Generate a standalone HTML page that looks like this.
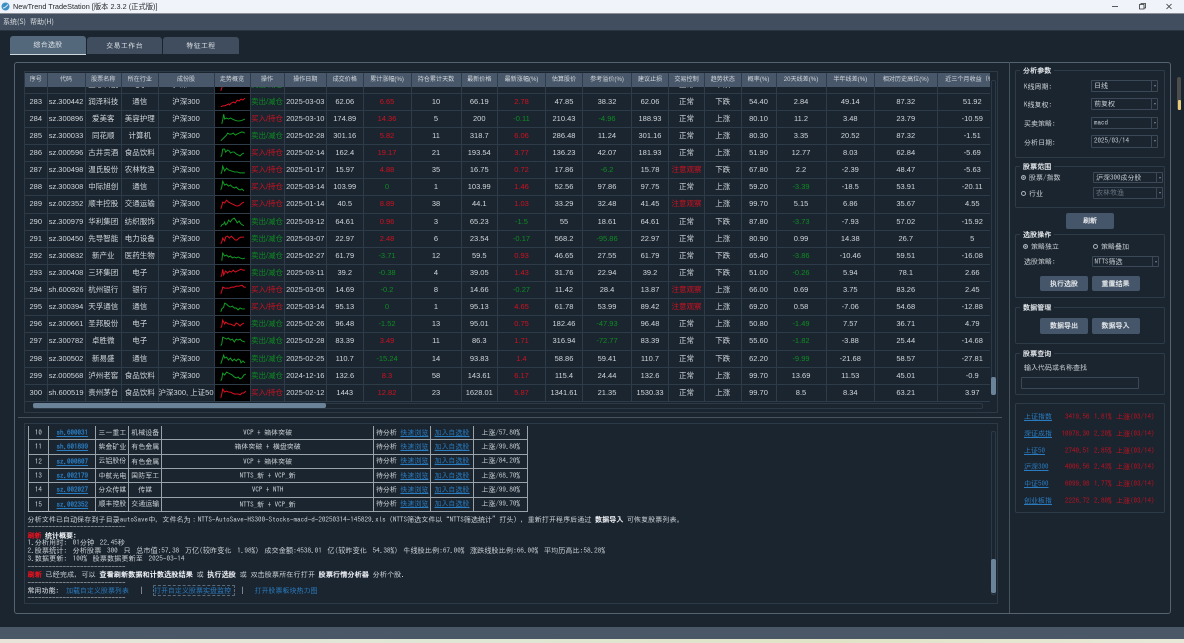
<!DOCTYPE html>
<html lang="zh"><head><meta charset="utf-8"><title>NewTrend TradeStation</title>
<style>
html,body{margin:0;padding:0;width:1184px;height:643px;overflow:hidden;background:#1a2530}
body{position:relative;font-family:"Liberation Sans","Noto Sans CJK SC",sans-serif;color:#d2d6da;filter:blur(.25px)}
.a{position:absolute}
#title{left:0;top:0;width:1184px;height:13px;background:#f0f3f9;border-bottom:1px solid #8a9096;box-sizing:content-box}
#menu{left:0;top:14px;width:1184px;height:16px;background:#414e5f;border-bottom:1px solid #2a3542;font:7px/16px "Noto Sans CJK SC",sans-serif;color:#d8dce0}
.tab{position:absolute;box-sizing:border-box;background:#3f4d5e;border-radius:3px 3px 0 0;text-align:center;color:#e0e4e8;font:7px/18px "IPAGothic","Noto Sans CJK SC",monospace;letter-spacing:.3px}
#frame{left:14px;top:62px;width:1155px;height:550px;border:1px solid #55626f;border-radius:3px}
#tf{left:24px;top:71px;width:972px;height:340px;border:1px solid #2c3947}
#clip{left:25px;top:87px;width:964.5px;height:315.5px;overflow:hidden}
#rows{margin-top:-10.43px;width:1000px}
.r,.h{display:grid;grid-template-columns:22.5px 38px 36.5px 36.5px 56px 36px 34px 42.5px 36.5px 48px 50px 36.5px 48px 37px 49px 37px 36px 36.5px 35px 50px 48.5px 62.5px 70.5px}
.r{height:17.13px;box-sizing:border-box;border-bottom:1px solid #2e3b49;font-size:7.5px;line-height:16.1px}
.r>*{text-align:center;white-space:nowrap;overflow:hidden;border-right:1px solid #2e3b49;font-style:normal;display:block;box-sizing:border-box}
.r>svg{width:100%;height:100%;padding:1px 1.3px 1.1px 1px;}
#hd{left:25px;top:73px;width:964.5px;height:14px;overflow:hidden;background:#485769}
.h{width:1000px;font-size:6.1px;line-height:14px;color:#d2d8de}
.h>*{text-align:center;white-space:nowrap;overflow:hidden;border-right:1px solid #2f3c4c;font-style:normal;display:block;box-sizing:border-box}
.R{color:#d0101e}.G{color:#0f8c20}
.m{font-family:"IPAGothic","Noto Sans CJK SC",monospace;font-size:7px;line-height:9px;white-space:nowrap;color:#ced2d6}
.sb{position:absolute;background:#6b8398;border-radius:2px}
.tr{position:absolute;border:1px solid #2c3947;border-radius:2px;box-sizing:border-box}
#low{left:24px;top:423px;width:972px;height:179px;border:1px solid #2c3947}
table{position:absolute;left:27.5px;top:426px;width:500px;height:81.5px;border-collapse:collapse;table-layout:fixed;font-family:"IPAGothic","Noto Sans CJK SC",monospace;font-size:7px;color:#ced2d6;text-align:center}
td{border:1px solid #9aa2aa;padding:0;white-space:nowrap;overflow:hidden;height:13.33px}
tr:first-child td{border-top:none}
a,.lk{color:#2a7cc0;text-decoration:underline}
td:nth-child(2) a{font-weight:bold}
.nu{text-decoration:none}
.w{color:#eef0f4;font-weight:bold}
.rd{color:#f0101c;font-weight:bold}
.gb{position:absolute;box-sizing:border-box;border:1px solid #2e3b49;border-radius:2px}
.gt{position:absolute;left:4px;top:-5px;padding:0 3px;background:#1a2530;font:bold 7px/9px "IPAGothic","Noto Sans CJK SC",monospace;color:#e0e4e8;letter-spacing:.1px}
.cb{position:absolute;box-sizing:border-box;border:1px solid #3a4857;border-radius:1px;font:7px/10px "IPAGothic","Noto Sans CJK SC",monospace;padding-left:2px;color:#c8ced4;white-space:nowrap}
.cb:after{content:"";position:absolute;right:5px;top:0;bottom:0;width:0;border-left:1px solid #3a4857}
.cb:before{content:"";position:absolute;right:1px;top:4px;border:1.3px solid transparent;border-top:2px solid #7a8693}
.btn{position:absolute;box-sizing:border-box;background:#46566a;border-radius:2px;text-align:center;font:bold 7px/15.5px "IPAGothic","Noto Sans CJK SC",monospace;color:#e0e4e8}
.rad{position:absolute;width:5px;height:5px;box-sizing:border-box;border:1px solid #aab2ba;border-radius:50%}
.rad.on{background:#aab2ba;box-shadow:inset 0 0 0 .6px #1a2530}
.ix{position:absolute;left:1024px;width:130.5px;height:9px;font:7px/9px "IPAGothic","Noto Sans CJK SC",monospace;white-space:nowrap}
.ix span{position:absolute;right:0;color:#c4101e;word-spacing:1px}
svg polyline{stroke-width:1}
</style></head><body>
<div class="a" id="title">
<svg class="a" style="left:1px;top:1.5px" width="9" height="9" viewBox="0 0 9 9"><circle cx="4.5" cy="4.5" r="4" fill="#3e8fc4"/><path d="M2 6C3.5 6 5 5 7 2.5" stroke="#e6f2fa" stroke-width="1" fill="none"/></svg>
<div class="a" style="left:13px;top:2px;font-size:7.3px;line-height:10px;color:#25282c;white-space:nowrap">NewTrend TradeStation [版本 2.3.2 (正式版)]</div>
<svg class="a" style="left:1110px;top:2px" width="66" height="9" viewBox="0 0 66 9" fill="none" stroke="#333" stroke-width=".8"><path d="M2 4.5H8"/><path d="M29.5 2.5h4.5v4.5h-4.5zM31 2.5V1.5h4.5v4.5h-1.5"/><path d="M56.5 2l5 5M61.5 2l-5 5"/></svg>
</div>
<div class="a" id="menu"><span class="a" style="left:3px;white-space:nowrap">系统(S)</span><span class="a" style="left:30px;white-space:nowrap">帮助(H)</span></div>
<div class="tab" style="left:10px;top:36px;width:76px;height:19px;background:#54687c;border-bottom:1.5px solid #cfd6dc">综合选股</div>
<div class="tab" style="left:87px;top:37px;width:75px;height:17px">交易工作台</div>
<div class="tab" style="left:163px;top:37px;width:76px;height:17px">特征工程</div>
<div class="a" id="frame"></div>
<div class="a" style="left:1009px;top:62px;width:1px;height:551px;background:#46525e"></div>
<div class="a" style="left:18px;top:416.5px;width:984px;height:1px;background:#46525e"></div>
<div class="a" id="tf"></div>
<div class="a" id="hd"><div class="h"><i>序号</i><i>代码</i><i>股票名称</i><i>所在行业</i><i>成份股</i><i>走势概览</i><i>操作</i><i>操作日期</i><i>成交价格</i><i>累计涨幅(%)</i><i>持仓累计天数</i><i>最新价格</i><i>最新涨幅(%)</i><i>估算股价</i><i>参考溢价(%)</i><i>建议止损</i><i>交易控制</i><i>趋势状态</i><i>概率(%)</i><i>20天线差(%)</i><i>半年线差(%)</i><i>相对历史高位(%)</i><i>近三个月收益（%）</i></div></div>
<div class="a" id="clip"><div id="rows">
<div class="r"><i>282</i><i>sz.300433</i><i>蓝思科技</i><i>电子</i><i>沪深300</i><svg viewBox="0 0 34 14" style="background:#000"><polyline fill="none" stroke="#e01020" points="5,13 6,10 7,7 8,9"/></svg><i class="G">卖出/减仓</i><i>2025-02-20</i><i>26.93</i><i class="G">-0.04</i><i>16</i><i>26.92</i><i class="R">2.02</i><i>19.66</i><i>36.93</i><i>26.93</i><i>正常</i><i>下跌</i><i>56.30</i><i class="G">-0.85</i><i>14.24</i><i>60.5</i><i>15.77</i></div>
<div class="r"><i>283</i><i>sz.300442</i><i>润泽科技</i><i>通信</i><i>沪深300</i><svg viewBox="0 0 34 14" style="background:#000"><polyline fill="none" stroke="#e01020" points="5,12 7,11 9,11 11,10 13,9 14,10 16,8 18,7 20,8 22,5 24,6 26,4 28,5 30,3"/></svg><i class="G">卖出/减仓</i><i>2025-03-03</i><i>62.06</i><i class="R">6.65</i><i>10</i><i>66.19</i><i class="R">2.78</i><i>47.85</i><i>38.32</i><i>62.06</i><i>正常</i><i>下跌</i><i>54.40</i><i>2.84</i><i>49.14</i><i>87.32</i><i>51.92</i></div>
<div class="r"><i>284</i><i>sz.300896</i><i>爱美客</i><i>美容护理</i><i>沪深300</i><svg viewBox="0 0 34 14" style="background:#000"><polyline fill="none" stroke="#12a024" points="6,12 7,8 8,2 9,7 11,6 13,7 15,6 17,7 19,8 22,9 25,9 28,8 30,7"/></svg><i class="R">买入/持仓</i><i>2025-03-10</i><i>174.89</i><i class="R">14.36</i><i>5</i><i>200</i><i class="G">-0.11</i><i>210.43</i><i class="G">-4.96</i><i>188.93</i><i>正常</i><i>上涨</i><i>80.10</i><i>11.2</i><i>3.48</i><i>23.79</i><i>-10.59</i></div>
<div class="r"><i>285</i><i>sz.300033</i><i>同花顺</i><i>计算机</i><i>沪深300</i><svg viewBox="0 0 34 14" style="background:#000"><polyline fill="none" stroke="#12a024" points="5,12 7,10 9,8 11,6 12,4 14,5 16,5 18,4 20,6 22,5 24,4 26,3 28,3 30,4"/></svg><i class="G">卖出/减仓</i><i>2025-02-28</i><i>301.16</i><i class="R">5.82</i><i>11</i><i>318.7</i><i class="R">6.06</i><i>286.48</i><i>11.24</i><i>301.16</i><i>正常</i><i>上涨</i><i>80.30</i><i>3.35</i><i>20.52</i><i>87.32</i><i>-1.51</i></div>
<div class="r"><i>286</i><i>sz.000596</i><i>古井贡酒</i><i>食品饮料</i><i>沪深300</i><svg viewBox="0 0 34 14" style="background:#000"><polyline fill="none" stroke="#12a024" points="5,11 6,9 7,3 9,3 10,6 12,4 14,5 15,7 17,6 19,6 21,8 23,9 25,10 27,8 29,7"/></svg><i class="R">买入/持仓</i><i>2025-02-14</i><i>162.4</i><i class="R">19.17</i><i>21</i><i>193.54</i><i class="R">3.77</i><i>136.23</i><i>42.07</i><i>181.93</i><i>正常</i><i>上涨</i><i>51.90</i><i>12.77</i><i>8.03</i><i>62.84</i><i>-5.69</i></div>
<div class="r"><i>287</i><i>sz.300498</i><i>温氏股份</i><i>农林牧渔</i><i>沪深300</i><svg viewBox="0 0 34 14" style="background:#000"><polyline fill="none" stroke="#12a024" points="5,11 6,9 7,3 9,8 11,5 13,7 16,8 19,9 22,9 25,10 28,10 30,10"/></svg><i class="R">买入/持仓</i><i>2025-01-17</i><i>15.97</i><i class="R">4.88</i><i>35</i><i>16.75</i><i class="R">0.72</i><i>17.86</i><i class="G">-6.2</i><i>15.78</i><i class="R">注意观察</i><i>下跌</i><i>67.80</i><i>2.2</i><i>-2.39</i><i>48.47</i><i>-5.63</i></div>
<div class="r"><i>288</i><i>sz.300308</i><i>中际旭创</i><i>通信</i><i>沪深300</i><svg viewBox="0 0 34 14" style="background:#000"><polyline fill="none" stroke="#12a024" points="5,10 6,7 7,1 9,5 11,4 13,6 15,5 17,7 19,8 21,7 23,9 25,10 27,9 29,11"/></svg><i class="R">买入/持仓</i><i>2025-03-14</i><i>103.99</i><i class="G">0</i><i>1</i><i>103.99</i><i class="R">1.46</i><i>52.56</i><i>97.86</i><i>97.75</i><i>正常</i><i>上涨</i><i>59.20</i><i class="G">-3.39</i><i>-18.5</i><i>53.91</i><i>-20.11</i></div>
<div class="r"><i>289</i><i>sz.002352</i><i>顺丰控股</i><i>交通运输</i><i>沪深300</i><svg viewBox="0 0 34 14" style="background:#000"><polyline fill="none" stroke="#e01020" points="5,12 6,9 7,5 9,6 11,3 13,5 15,6 17,7 19,8 21,9 23,9 25,8 27,6 29,5"/></svg><i class="R">买入/持仓</i><i>2025-01-14</i><i>40.5</i><i class="R">8.89</i><i>38</i><i>44.1</i><i class="R">1.03</i><i>33.29</i><i>32.48</i><i>41.45</i><i class="R">注意观察</i><i>上涨</i><i>99.70</i><i>5.15</i><i>6.86</i><i>35.67</i><i>4.55</i></div>
<div class="r"><i>290</i><i>sz.300979</i><i>华利集团</i><i>纺织服饰</i><i>沪深300</i><svg viewBox="0 0 34 14" style="background:#000"><polyline fill="none" stroke="#12a024" points="5,12 6,10 8,9 9,7 10,10 12,8 13,5 15,7 17,4 19,3 21,6 22,8 24,6 26,9 29,11"/></svg><i class="G">卖出/减仓</i><i>2025-03-12</i><i>64.61</i><i class="R">0.96</i><i>3</i><i>65.23</i><i class="G">-1.5</i><i>55</i><i>18.61</i><i>64.61</i><i>正常</i><i>下跌</i><i>87.80</i><i class="G">-3.73</i><i>-7.93</i><i>57.02</i><i>-15.92</i></div>
<div class="r"><i>291</i><i>sz.300450</i><i>先导智能</i><i>电力设备</i><i>沪深300</i><svg viewBox="0 0 34 14" style="background:#000"><polyline fill="none" stroke="#e01020" points="5,12 6,10 7,6 9,9 10,5 12,4 14,6 16,4 18,6 20,8 22,8 24,6 26,5 29,5"/></svg><i class="G">卖出/减仓</i><i>2025-03-07</i><i>22.97</i><i class="R">2.48</i><i>6</i><i>23.54</i><i class="G">-0.17</i><i>568.2</i><i class="G">-95.86</i><i>22.97</i><i>正常</i><i>上涨</i><i>80.90</i><i>0.99</i><i>14.38</i><i>26.7</i><i>5</i></div>
<div class="r"><i>292</i><i>sz.300832</i><i>新产业</i><i>医药生物</i><i>沪深300</i><svg viewBox="0 0 34 14" style="background:#000"><polyline fill="none" stroke="#12a024" points="6,12 7,4 9,7 11,6 13,8 15,7 17,9 19,8 21,9 23,8 25,9 28,10 30,9"/></svg><i class="G">卖出/减仓</i><i>2025-02-27</i><i>61.79</i><i class="G">-3.71</i><i>12</i><i>59.5</i><i class="R">0.93</i><i>46.65</i><i>27.55</i><i>61.79</i><i>正常</i><i>下跌</i><i>65.40</i><i class="G">-3.86</i><i>-10.46</i><i>59.51</i><i>-16.08</i></div>
<div class="r"><i>293</i><i>sz.300408</i><i>三环集团</i><i>电子</i><i>沪深300</i><svg viewBox="0 0 34 14" style="background:#000"><polyline fill="none" stroke="#e01020" points="5,11 6,9 7,3 8,9 10,5 12,7 14,5 16,6 18,4 20,6 22,5 24,4 26,3 28,4 30,4"/></svg><i class="G">卖出/减仓</i><i>2025-03-11</i><i>39.2</i><i class="G">-0.38</i><i>4</i><i>39.05</i><i class="R">1.43</i><i>31.76</i><i>22.94</i><i>39.2</i><i>正常</i><i>下跌</i><i>51.00</i><i class="G">-0.26</i><i>5.94</i><i>78.1</i><i>2.66</i></div>
<div class="r"><i>294</i><i>sh.600926</i><i>杭州银行</i><i>银行</i><i>沪深300</i><svg viewBox="0 0 34 14" style="background:#000"><polyline fill="none" stroke="#e01020" points="5,11 6,8 7,4 9,5 12,5 14,5 16,4 19,4 21,3 24,3 27,2 29,4 31,4"/></svg><i class="R">买入/持仓</i><i>2025-03-05</i><i>14.69</i><i class="G">-0.2</i><i>8</i><i>14.66</i><i class="G">-0.27</i><i>11.42</i><i>28.4</i><i>13.87</i><i class="R">注意观察</i><i>上涨</i><i>66.00</i><i>0.69</i><i>3.75</i><i>83.26</i><i>2.45</i></div>
<div class="r"><i>295</i><i>sz.300394</i><i>天孚通信</i><i>通信</i><i>沪深300</i><svg viewBox="0 0 34 14" style="background:#000"><polyline fill="none" stroke="#12a024" points="5,12 6,9 8,7 9,3 11,4 13,6 15,7 17,6 19,8 21,8 23,10 25,8 27,9 30,9"/></svg><i class="R">买入/持仓</i><i>2025-03-14</i><i>95.13</i><i class="G">0</i><i>1</i><i>95.13</i><i class="R">4.65</i><i>61.78</i><i>53.99</i><i>89.42</i><i class="R">注意观察</i><i>上涨</i><i>69.20</i><i>0.58</i><i>-7.06</i><i>54.68</i><i>-12.88</i></div>
<div class="r"><i>296</i><i>sz.300661</i><i>圣邦股份</i><i>电子</i><i>沪深300</i><svg viewBox="0 0 34 14" style="background:#000"><polyline fill="none" stroke="#e01020" points="5,11 6,9 7,3 9,7 10,5 13,7 15,7 17,8 19,9 21,6 23,7 25,9 27,7 29,6"/></svg><i class="G">卖出/减仓</i><i>2025-02-26</i><i>96.48</i><i class="G">-1.52</i><i>13</i><i>95.01</i><i class="R">0.75</i><i>182.46</i><i class="G">-47.93</i><i>96.48</i><i>正常</i><i>上涨</i><i>50.80</i><i class="G">-1.49</i><i>7.57</i><i>36.71</i><i>4.79</i></div>
<div class="r"><i>297</i><i>sz.300782</i><i>卓胜微</i><i>电子</i><i>沪深300</i><svg viewBox="0 0 34 14" style="background:#000"><polyline fill="none" stroke="#12a024" points="5,12 6,10 7,3 9,4 11,5 13,4 15,6 17,5 19,8 21,5 23,6 25,5 27,7 30,8"/></svg><i class="G">卖出/减仓</i><i>2025-02-28</i><i>83.39</i><i class="R">3.49</i><i>11</i><i>86.3</i><i class="R">1.71</i><i>316.94</i><i class="G">-72.77</i><i>83.39</i><i>正常</i><i>下跌</i><i>55.60</i><i class="G">-1.82</i><i>-3.88</i><i>25.44</i><i>-14.68</i></div>
<div class="r"><i>298</i><i>sz.300502</i><i>新易盛</i><i>通信</i><i>沪深300</i><svg viewBox="0 0 34 14" style="background:#000"><polyline fill="none" stroke="#12a024" points="5,12 6,9 8,3 9,6 11,5 13,8 15,6 17,9 19,7 21,9 23,7 25,8 26,11 28,9 30,11"/></svg><i class="G">卖出/减仓</i><i>2025-02-25</i><i>110.7</i><i class="G">-15.24</i><i>14</i><i>93.83</i><i class="R">1.4</i><i>58.86</i><i>59.41</i><i>110.7</i><i>正常</i><i>下跌</i><i>62.20</i><i class="G">-9.99</i><i>-21.68</i><i>58.57</i><i>-27.81</i></div>
<div class="r"><i>299</i><i>sz.000568</i><i>泸州老窖</i><i>食品饮料</i><i>沪深300</i><svg viewBox="0 0 34 14" style="background:#000"><polyline fill="none" stroke="#12a024" points="5,12 6,10 7,4 9,6 11,3 13,4 15,5 17,6 19,8 21,9 23,8 25,10 27,9 29,6 31,5"/></svg><i class="G">卖出/减仓</i><i>2024-12-16</i><i>132.6</i><i class="R">8.3</i><i>58</i><i>143.61</i><i class="R">6.17</i><i>115.4</i><i>24.44</i><i>132.6</i><i>正常</i><i>上涨</i><i>99.70</i><i>13.69</i><i>11.53</i><i>45.01</i><i>-0.9</i></div>
<div class="r"><i>300</i><i>sh.600519</i><i>贵州茅台</i><i>食品饮料</i><i>沪深300, 上证50</i><svg viewBox="0 0 34 14" style="background:#000"><polyline fill="none" stroke="#e01020" points="5,12 6,8 7,3 9,6 11,5 13,6 15,6 17,7 19,8 21,8 23,8 25,9 27,7 29,7 31,5"/></svg><i class="R">买入/持仓</i><i>2025-02-12</i><i>1443</i><i class="R">12.82</i><i>23</i><i>1628.01</i><i class="R">5.87</i><i>1341.61</i><i>21.35</i><i>1530.33</i><i>正常</i><i>上涨</i><i>99.70</i><i>8.5</i><i>8.34</i><i>63.21</i><i>3.97</i></div>
</div></div>
<div class="tr" style="left:990.5px;top:80px;width:5.5px;height:315px"></div>
<div class="sb" style="left:991px;top:376.5px;width:4.5px;height:18px"></div>
<div class="tr" style="left:33px;top:403px;width:950px;height:5.5px"></div>
<div class="sb" style="left:33px;top:403.3px;width:293px;height:5px"></div>
<div class="a" id="low"></div>
<div class="tr" style="left:990.5px;top:431px;width:5.5px;height:164px"></div>
<div class="sb" style="left:991px;top:559px;width:4.5px;height:34px"></div>
<table><colgroup><col style="width:20.7px"><col style="width:47.2px"><col style="width:33px"><col style="width:32.8px"><col style="width:211.8px"><col style="width:57.4px"><col style="width:42.4px"><col style="width:54.7px"></colgroup>
<tr><td>10</td><td><a>sh.600031</a></td><td>三一重工</td><td>机械设备</td><td>VCP + 箱体突破</td><td>待分析 <a>快速浏览</a></td><td><a>加入自选股</a></td><td>上涨/57.80%</td></tr>
<tr><td>11</td><td><a>sh.601899</a></td><td>紫金矿业</td><td>有色金属</td><td>箱体突破 + 横盘突破</td><td>待分析 <a>快速浏览</a></td><td><a>加入自选股</a></td><td>上涨/99.80%</td></tr>
<tr><td>12</td><td><a>sz.000807</a></td><td>云铝股份</td><td>有色金属</td><td>VCP + 箱体突破</td><td>待分析 <a>快速浏览</a></td><td><a>加入自选股</a></td><td>上涨/84.20%</td></tr>
<tr><td>13</td><td><a>sz.002179</a></td><td>中航光电</td><td>国防军工</td><td>NTTS_新 + VCP_新</td><td>待分析 <a>快速浏览</a></td><td><a>加入自选股</a></td><td>上涨/68.70%</td></tr>
<tr><td>14</td><td><a>sz.002027</a></td><td>分众传媒</td><td>传媒</td><td>VCP + NTH</td><td>待分析 <a>快速浏览</a></td><td><a>加入自选股</a></td><td>上涨/99.80%</td></tr>
<tr><td>15</td><td><a>sz.002352</a></td><td>顺丰控股</td><td>交通运输</td><td>NTTS_新 + VCP_新</td><td>待分析 <a>快速浏览</a></td><td><a>加入自选股</a></td><td>上涨/99.70%</td></tr>
</table>
<div class="a m" style="left:27.5px;top:507px">----------------------------</div>
<div class="a m" style="left:27.5px;top:515px;font-size:7.1px">分析文件已自动保存到子目录autoSave中，文件名为：NTTS-AutoSave-HS300-Stocks-macd-d-20250314-145829.xls（NTTS筛选文件以“NTTS筛选统计”打头），重新打开程序后通过 <b class="w">数据导入</b> 可恢复股票列表。</div>
<div class="a m" style="left:27.5px;top:522px">----------------------------</div>
<div class="a m" style="left:27.5px;top:530.5px"><b class="rd">刷新</b> <b class="w">统计概要:</b></div>
<div class="a m" style="left:27.5px;top:538.2px;font-size:7.2px;word-spacing:2px">1.分析用时: 01分钟 22.45秒</div>
<div class="a m" style="left:27.5px;top:546.2px;font-size:7.2px;word-spacing:2px">2.股票统计: 分析股票 300 只 总市值:57.38 万亿(较昨变化 1.98%) 成交金额:4538.01 亿(较昨变化 54.38%) 牛线股比例:67.00% 涨跌线股比例:66.00% 平均历高比:58.28%</div>
<div class="a m" style="left:27.5px;top:553.8px;font-size:7.2px;word-spacing:2px">3.数据更新: 100% 股票数据更新至 2025-03-14</div>
<div class="a m" style="left:27.5px;top:561.5px">----------------------------</div>
<div class="a m" style="left:27.5px;top:569.5px;font-size:7.2px"><b class="rd">刷新</b> 已经完成，可以 <b class="w">查看刷新数据和计数选股结果</b> 或 <b class="w">执行选股</b> 或 双击股票所在行打开 <b class="w">股票行情分析器</b> 分析个股.</div>
<div class="a m" style="left:27.5px;top:577.5px">----------------------------</div>
<div class="a m" style="left:27.5px;top:585.5px"><b class="w" style="font-weight:normal">常用功能:</b></div>
<div class="a m" style="left:66px;top:585.5px;color:#2a7cc0">加载自定义股票列表</div>
<div class="a m" style="left:140px;top:585.5px;color:#dde">|</div>
<div class="a m" style="left:153px;top:585px;width:80px;height:9px;border:1px dashed #5b6a78;border-radius:1px;color:#2a7cc0">打开自定义股票实盘监控</div>
<div class="a m" style="left:240.5px;top:585.5px;color:#dde">|</div>
<div class="a m" style="left:254.5px;top:585.5px;color:#2a7cc0">打开股票板块热力图</div>
<div class="a m" style="left:27.5px;top:592.8px">----------------------------</div>

<div class="gb" style="left:1015px;top:70px;width:150px;height:87.5px"><div class="gt">分析参数</div></div>
<div class="a m" style="left:1024px;top:81.5px">K线周期:</div><div class="cb" style="left:1091px;top:80px;width:67px;height:12px">日线</div>
<div class="a m" style="left:1024px;top:100px">K线复权:</div><div class="cb" style="left:1091px;top:98.3px;width:67px;height:12px">前复权</div>
<div class="a m" style="left:1024px;top:118.5px">买卖策略:</div><div class="cb" style="left:1091px;top:117px;width:67px;height:12px">macd</div>
<div class="a m" style="left:1024px;top:137.5px">分析日期:</div><div class="cb" style="left:1091px;top:135px;width:67px;height:12.5px">2025/03/14</div>

<div class="gb" style="left:1015px;top:165.5px;width:149.5px;height:42px"><div class="gt">股票范围</div></div>
<div class="rad on" style="left:1021px;top:174.5px"></div><div class="a m" style="left:1029px;top:172.5px">股票/指数</div>
<div class="cb" style="left:1093px;top:171.5px;width:70px;height:11px">沪深300成分股</div>
<div class="rad" style="left:1021px;top:190.5px"></div><div class="a m" style="left:1029px;top:188.5px">行业</div>
<div class="cb" style="left:1093px;top:187px;width:70px;height:12px;color:#6c7884">农林牧渔</div>
<div class="btn" style="left:1066px;top:212.5px;width:48px;height:16px">刷新</div>

<div class="gb" style="left:1015px;top:234.3px;width:149.5px;height:64px"><div class="gt">选股操作</div></div>
<div class="rad on" style="left:1023px;top:244.3px"></div><div class="a m" style="left:1031px;top:242.3px">策略独立</div>
<div class="rad" style="left:1093px;top:244.3px"></div><div class="a m" style="left:1101px;top:242.3px">策略叠加</div>
<div class="a m" style="left:1024px;top:257.3px">选股策略:</div><div class="cb" style="left:1091.5px;top:255.5px;width:67px;height:11.5px">NTTS筛选</div>
<div class="btn" style="left:1040px;top:275.5px;width:48px;height:15.5px">执行选股</div>
<div class="btn" style="left:1091.5px;top:275.5px;width:48px;height:15.5px">重置结果</div>

<div class="gb" style="left:1015px;top:307.3px;width:149.5px;height:37px"><div class="gt">数据管理</div></div>
<div class="btn" style="left:1040px;top:317.5px;width:48px;height:16px">数据导出</div>
<div class="btn" style="left:1091.5px;top:317.5px;width:48px;height:16px">数据导入</div>

<div class="gb" style="left:1015px;top:352.7px;width:149.5px;height:42px"><div class="gt">股票查询</div></div>
<div class="a m" style="left:1024px;top:362.5px">输入代码或名称查找</div>
<div class="a" style="left:1021px;top:377.3px;width:118px;height:12px;box-sizing:border-box;border:1px solid #3a4857;border-radius:1px"></div>

<div class="gb" style="left:1015px;top:402.7px;width:149.5px;height:110.5px"></div>
<div class="ix" style="top:411.5px"><a>上证指数</a><span>3419.56 1.81% 上涨(03/14)</span></div>
<div class="ix" style="top:428.5px"><a>深证成指</a><span>10978.30 2.20% 上涨(03/14)</span></div>
<div class="ix" style="top:445.5px"><a>上证50</a><span>2740.51 2.85% 上涨(03/14)</span></div>
<div class="ix" style="top:462.3px"><a>沪深300</a><span>4006.56 2.43% 上涨(03/14)</span></div>
<div class="ix" style="top:479.2px"><a>中证500</a><span>6099.98 1.77% 上涨(03/14)</span></div>
<div class="ix" style="top:495.8px"><a>创业板指</a><span>2226.72 2.80% 上涨(03/14)</span></div>

<div class="a" style="left:1177px;top:77px;width:3.5px;height:33px;background:#4c4c4a;border-radius:2px"></div>
<div class="a" style="left:1178px;top:100px;width:3px;height:10px;background:#ecca7c;border-radius:1px"></div>

<div class="a" style="left:0;top:627px;width:1184px;height:11.5px;background:#4a5766"></div>
<div class="a" style="left:0;top:638.5px;width:1184px;height:4.5px;background:linear-gradient(90deg,#e8e4da 0%,#dfe6d4 40%,#e0e3c6 70%,#e8e8d8 100%)"></div>
</body></html>
